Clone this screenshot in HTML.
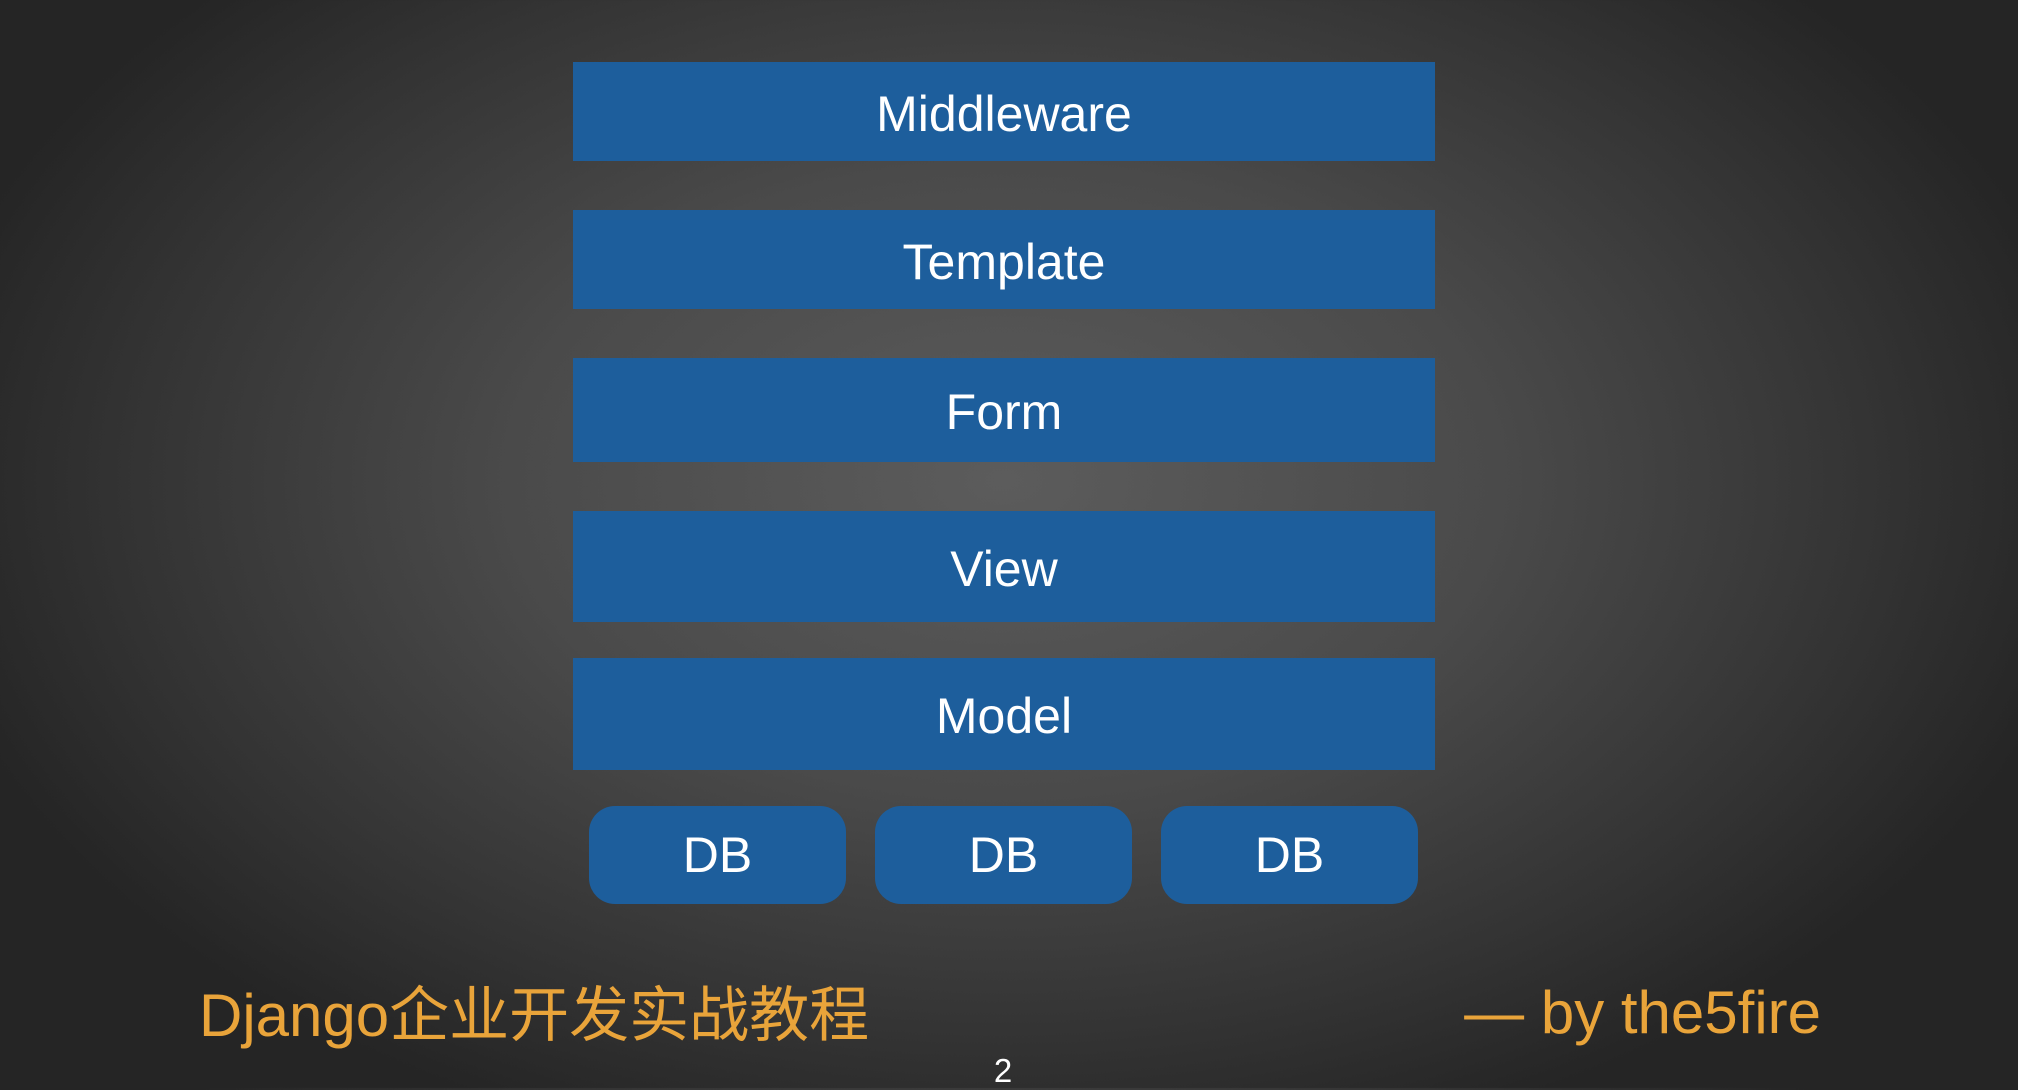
<!DOCTYPE html>
<html><head><meta charset="utf-8"><style>
html,body{margin:0;padding:0}
body{width:2018px;height:1088px;overflow:hidden;position:relative;
background:radial-gradient(ellipse 1100px 700px at 1004px 480px,#5c5c5c 0%,#4a4a4a 45%,#333 80%,#252525 100%);
font-family:"Liberation Sans","Noto Sans CJK SC",sans-serif;}
.b{position:absolute;left:573px;width:862px;background:#1d5e9c;color:#fff;display:flex;align-items:center;justify-content:center;font-size:50px;font-weight:300;padding-top:4px;box-sizing:border-box}
.d{position:absolute;top:806px;height:98px;width:257px;border-radius:26px;background:#1d5e9c;color:#fff;display:flex;align-items:center;justify-content:center;font-size:50px}
.t{position:absolute;color:#e9a43a;white-space:nowrap}
</style></head><body>
<div class="b" style="top:62px;height:99px">Middleware</div>
<div class="b" style="top:210px;height:99px">Template</div>
<div class="b" style="top:358px;height:104px">Form</div>
<div class="b" style="top:511px;height:111px">View</div>
<div class="b" style="top:658px;height:112px">Model</div>
<div class="d" style="left:589px">DB</div>
<div class="d" style="left:875px">DB</div>
<div class="d" style="left:1161px">DB</div>
<div class="t" style="left:199px;top:967px;font-size:60px">Django企业开发实战教程</div>
<div class="t" style="right:197px;top:978px;font-size:60px">— by the5fire</div>
<div style="position:absolute;left:0;width:2006px;text-align:center;top:1052px;color:#fff;font-size:33px">2</div>
</body></html>
